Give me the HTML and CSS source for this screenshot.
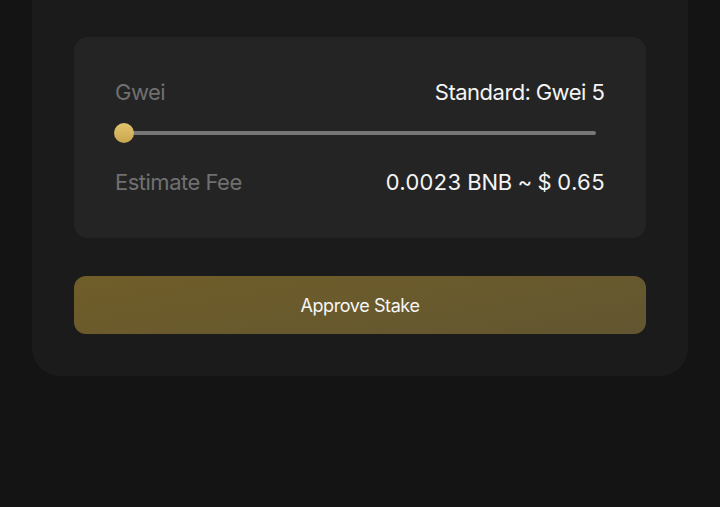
FILE: index.html
```html
<!DOCTYPE html>
<html lang="en">
<head>
<meta charset="utf-8">
<title>Approve Stake</title>
<link rel="stylesheet" href="styles.css">
</head>
<body>
  <div class="card">
    <div class="fee-box">
      <div class="row">
        <span class="label">Gwei</span>
        <span class="value">Standard: Gwei 5</span>
      </div>
      <div class="slider">
        <div class="track"></div>
        <div class="thumb"></div>
      </div>
      <div class="row">
        <span class="label">Estimate Fee</span>
        <span class="value amount">0.0023 BNB ~ $ 0.65</span>
      </div>
    </div>
    <button class="approve">Approve Stake</button>
  </div>
</body>
</html>
```
FILE: styles.css
```css
* { box-sizing: border-box; }
html, body {
  margin: 0;
  background: #141414;
  font-family: Inter, "Noto Sans", sans-serif;
}
body { height: 507px; overflow: hidden; }
.card {
  margin: 0 32px;
  background: #1b1b1b;
  border-radius: 0 0 28px 28px;
  padding: 37px 42px 42px;
  display: flex;
  flex-direction: column;
  gap: 38px;
}
.fee-box {
  background: #242424;
  border-radius: 14px;
  padding: 41px 41px 42px;
  display: flex;
  flex-direction: column;
}
.row {
  display: flex;
  justify-content: space-between;
  align-items: center;
  height: 28px;
  font-size: 22px;
  letter-spacing: -0.5px;
}
.label { color: #707070; }
.value {
  color: #f4f4f4;
  font-variant-numeric: tabular-nums;
}
.amount { letter-spacing: -0.2px; }
.slider {
  position: relative;
  height: 20px;
  margin: 17px 0 25px;
}
.track {
  position: absolute;
  left: 10px;
  right: 9px;
  top: 8px;
  height: 4px;
  border-radius: 2px;
  background: #777777;
}
.thumb {
  position: absolute;
  left: -1px;
  top: 0;
  width: 20px;
  height: 20px;
  border-radius: 50%;
  background: linear-gradient(180deg, #e2c46d, #c8a54f);
}
.approve {
  height: 58px;
  border: none;
  border-radius: 12px;
  background: linear-gradient(170deg, #705e29, #625631);
  color: #f6f6f6;
  font-family: inherit;
  font-size: 18px;
  letter-spacing: -0.4px;
  cursor: pointer;
}
```
